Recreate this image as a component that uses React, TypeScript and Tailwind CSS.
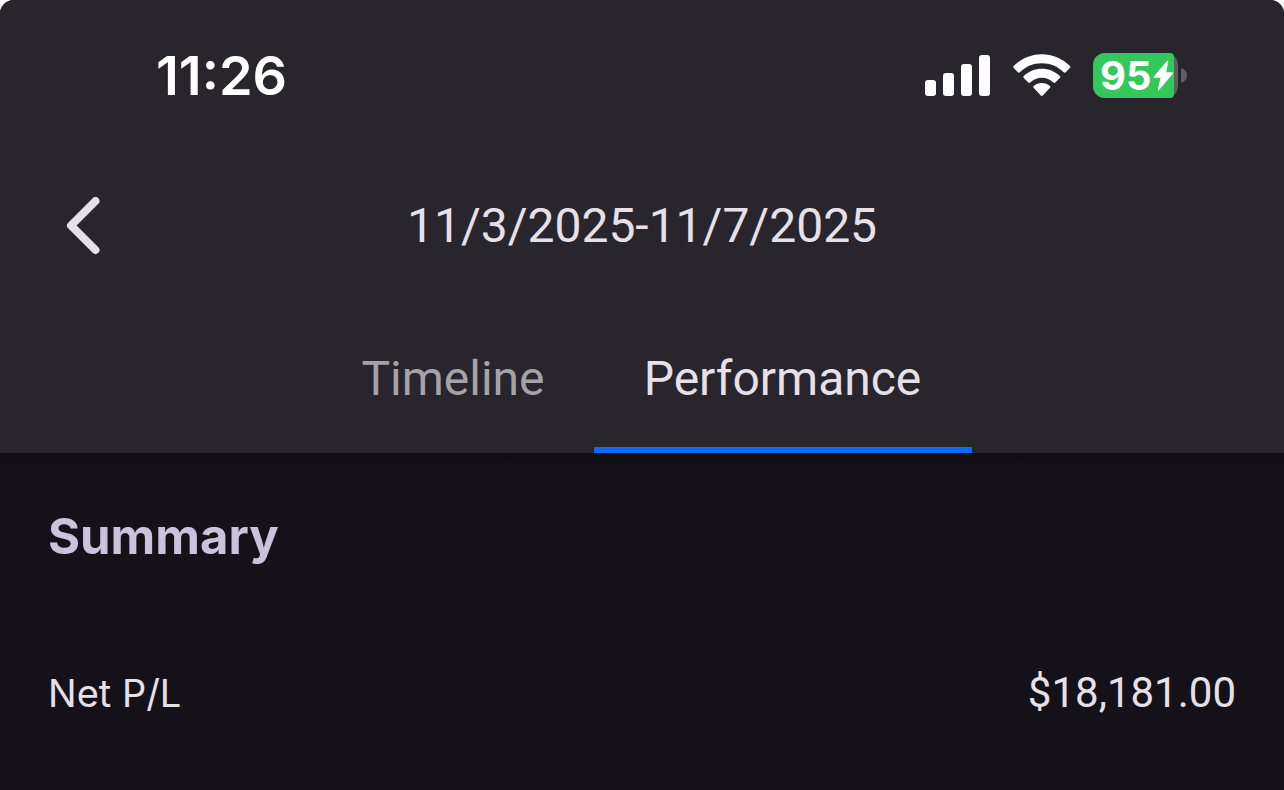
import React from 'react';

const tabs = [
  { name: 'Timeline', active: false },
  { name: 'Performance', active: true },
];

const summary = [{ label: 'Net P/L', value: '$18,181.00' }];

const SignalIcon = () => (
  <svg width="66" height="42" viewBox="0 0 66 42" fill="#fff" aria-hidden="true">
    <rect x="0" y="26" width="11" height="16" rx="3" />
    <rect x="18" y="19" width="11" height="23" rx="3" />
    <rect x="36" y="10" width="11" height="32" rx="3" />
    <rect x="54" y="1" width="11" height="41" rx="3" />
  </svg>
);

const WifiIcon = () => (
  <svg width="58" height="42" viewBox="0 0 58 42" fill="#fff" aria-hidden="true">
    <path d="M.8 11.800C8.500 4.300 18.300.2 28.800.2s20.300 4.100 28 11.600c.7.700.7 1.500.1 2.200l-4.200 4.300c-.6.600-1.400.600-2 0C44.800 12.500 37.300 9.300 28.800 9.300S12.800 12.500 6.900 18.300c-.6.600-1.400.600-2 0L.7 14c-.6-.7-.6-1.500.1-2.200z" />
    <path d="M10.800 21.900c4.900-4.600 11.200-7.200 18-7.200s13.100 2.600 18 7.200c.6.600.6 1.400 0 2l-4.500 4.600c-.6.600-1.300.600-1.900 0-3.200-3-7.200-4.700-11.600-4.700s-8.400 1.700-11.600 4.700c-.6.600-1.300.600-1.900 0l-4.500-4.600c-.6-.6-.6-1.400 0-2z" />
    <path d="M20.700 31.900c2.200-1.900 5.100-3 8.100-3s5.900 1.100 8.100 3c.6.500.6 1.300.1 1.900l-7.200 7.700c-.6.600-1.400.600-2 0l-7.200-7.700c-.5-.6-.5-1.400.1-1.900z" />
  </svg>
);

const Battery = () => (
  <div className="flex items-center gap-[3px]">
    <div className="flex h-[45px] w-[85px] rounded-xl bg-[#5f5d63]">
      <div className="flex w-[81px] items-center rounded-l-xl rounded-r-[4px] bg-[#34c759] pl-[7px]">
        <span className="text-[40px] leading-[45px] font-bold">95</span>
        <svg className="shrink-0" width="22" height="31" viewBox="0 0 22 31" fill="#fff" stroke="#fff" strokeWidth="1.500" strokeLinejoin="round" aria-hidden="true">
          <path d="M15.500 1.500 2.500 17h7L6.500 29.500 20.500 13h-7.200z" />
        </svg>
      </div>
    </div>
    <svg width="6" height="15" viewBox="0 0 6 15" fill="#5f5d63" aria-hidden="true">
      <path d="M0 0c3.500 1 6 4 6 7.500S3.500 14 0 15z" />
    </svg>
  </div>
);

export default function App() {
  return (
    <div className="bg-white">
      <div className="min-h-screen rounded-t-[14px] bg-[#141218] font-['Roboto',sans-serif] text-[#e6e0e9]">
        <header className="rounded-t-[14px] bg-[#28252c]">
          {/* Status bar */}
          <div className="flex h-[152px] items-center justify-between pr-[97px] pl-[156px] font-['Inter',sans-serif] text-white">
            <span className="text-[54px] leading-[60px] font-semibold">11:26</span>
            <div className="flex items-center gap-[22px] pb-[2px]">
              <SignalIcon />
              <WifiIcon />
              <Battery />
            </div>
          </div>

          {/* Title */}
          <div className="grid h-[148px] grid-cols-[120px_1fr_120px] items-center">
            <button type="button" aria-label="Back" className="flex justify-end pr-5">
              <svg width="34" height="58" viewBox="0 0 34 58" fill="none" stroke="currentColor" strokeWidth="8" strokeLinecap="round" strokeLinejoin="round" aria-hidden="true">
                <path d="M29.500 4 5 28.500 29.500 53" />
              </svg>
            </button>
            <h1 className="text-center text-5xl">11/3/2025-11/7/2025</h1>
          </div>

          <nav className="flex justify-center">
            {tabs.map((tab) => (
              <button
                key={tab.name}
                type="button"
                aria-current={tab.active ? 'page' : undefined}
                className={
                  tab.active
                    ? 'h-[153px] min-w-[378px] border-b-[6px] border-[#0a6cf5] px-12 pt-[10px] text-5xl'
                    : 'h-[153px] min-w-[281px] border-b-[6px] border-transparent px-12 pt-[10px] text-5xl text-[#a5a2a8]'
                }
              >
                {tab.name}
              </button>
            ))}
          </nav>
        </header>

        <main className="bg-linear-to-b from-[#0f0d12] to-[#141218] to-[16px] px-12 pt-[54px]">
          <h2 className="font-['Inter',sans-serif] text-[49px] leading-[60px] font-bold text-[#ccc2dc]">
            Summary
          </h2>
          <dl className="mt-24">
            {summary.map((row) => (
              <div key={row.label} className="flex items-baseline justify-between">
                <dt className="font-['Inter',sans-serif] text-[38px] leading-[60px]">{row.label}</dt>
                <dd className="text-[42px] leading-[60px]">{row.value}</dd>
              </div>
            ))}
          </dl>
        </main>
      </div>
    </div>
  );
}
